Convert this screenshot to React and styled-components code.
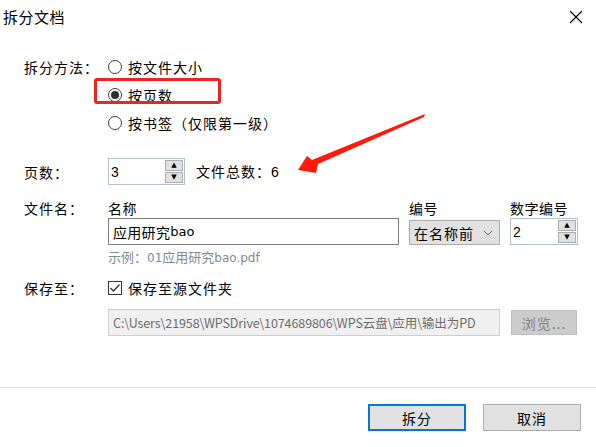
import React from "react";
import styled, { createGlobalStyle } from "styled-components";

const GlobalStyle = createGlobalStyle`
  html, body {
    margin: 0;
    padding: 0;
    background: #ffffff;
  }
  body {
    font-family: "Noto Sans CJK SC", "Microsoft YaHei", sans-serif;
    font-size: 14px;
    color: #000;
  }
`;

function App() {
  return (
    <>
      <GlobalStyle />
      <Dialog>
        <TitleBar>
          <Title>拆分文档</Title>
          <CloseButton>
            <svg width="14" height="14" viewBox="0 0 14 14">
              <path d="M1 1 L13 13 M13 1 L1 13" stroke="#000" strokeWidth="1.1" />
            </svg>
          </CloseButton>
        </TitleBar>

        <Body>
          <Row>
            <Label>拆分方法：</Label>
            <Options>
              <Option>
                <Radio />
                按文件大小
              </Option>
              <Option>
                <Radio checked />
                按页数
              </Option>
              <Option>
                <Radio />
                按书签（仅限第一级）
              </Option>
            </Options>
          </Row>

          <PagesRow>
            <Label>页数：</Label>
            <Spinner width={77}>
              <SpinValue>3</SpinValue>
              <SpinButtons>
                <SpinButton>▲</SpinButton>
                <SpinButton>▼</SpinButton>
              </SpinButtons>
            </Spinner>
            <Total>
              文件总数：<Num>6</Num>
            </Total>
          </PagesRow>

          <NameRow>
            <Label>文件名：</Label>
            <Field>
              <SubLabel>名称</SubLabel>
              <TextInput>
                应用研究<Latin>bao</Latin>
              </TextInput>
              <Hint>
                示例：<Latin>01</Latin>应用研究<Latin>bao.pdf</Latin>
              </Hint>
            </Field>
            <Column>
              <SubLabel>编号</SubLabel>
              <Select>
                在名称前
                <svg width="10" height="6" viewBox="0 0 10 6">
                  <path d="M1 1 L5 5 L9 1" fill="none" stroke="#666" strokeWidth="1" />
                </svg>
              </Select>
            </Column>
            <Column>
              <SubLabel>数字编号</SubLabel>
              <Spinner width={68}>
                <SpinValue>2</SpinValue>
                <SpinButtons>
                  <SpinButton>▲</SpinButton>
                  <SpinButton>▼</SpinButton>
                </SpinButtons>
              </Spinner>
            </Column>
          </NameRow>

          <SaveRow>
            <Label>保存至：</Label>
            <Field>
              <Option>
                <Checkbox>
                  <svg width="12" height="10" viewBox="0 0 12 10">
                    <path d="M1.5 5 L4.5 8 L10.5 1.5" fill="none" stroke="#333" strokeWidth="1.3" />
                  </svg>
                </Checkbox>
                保存至源文件夹
              </Option>
              <PathRow>
                <PathInput>
                  <PathText>C:\Users\21958\WPSDrive\1074689806\WPS云盘\应用\输出为PD</PathText>
                </PathInput>
                <BrowseButton>浏览...</BrowseButton>
              </PathRow>
            </Field>
          </SaveRow>
        </Body>

        <Footer>
          <Button primary>拆分</Button>
          <Button>取消</Button>
        </Footer>

        <Highlight />
        <Arrow width="140" height="70" viewBox="290 110 140 70">
          <polygon
            points="425,114 424,117 318,164 316,173 298,170 307,156 312,160"
            fill="#ff1a0a"
          />
        </Arrow>
      </Dialog>
    </>
  );
}

const Dialog = styled.div`
  position: relative;
  width: 596px;
  height: 447px;
  background: #fff;
  display: flex;
  flex-direction: column;
  overflow: hidden;
`;

const TitleBar = styled.div`
  height: 35px;
  display: flex;
  align-items: center;
  justify-content: space-between;
  padding: 0 13px 0 3px;
`;

const Title = styled.div`
  font-size: 15px;
  letter-spacing: 0.5px;
  line-height: 20px;
  margin-top: -2px;
`;

const CloseButton = styled.div`
  width: 14px;
  height: 14px;
  display: flex;
  margin-top: -2px;
`;

const Body = styled.div`
  flex: 1;
  padding: 22px 0 0 24px;
  display: flex;
  flex-direction: column;
`;

const Row = styled.div`
  display: flex;
  align-items: flex-start;
`;

const Label = styled.div`
  width: 84px;
  flex-shrink: 0;
  line-height: 20px;
  letter-spacing: 1px;
`;

const Options = styled.div`
  display: flex;
  flex-direction: column;
  gap: 8px;
`;

const Option = styled.div`
  display: flex;
  align-items: center;
  gap: 6px;
  height: 20px;
  line-height: 20px;
  letter-spacing: 1px;
`;

const Radio = styled.span`
  width: 14px;
  height: 14px;
  box-sizing: border-box;
  border-radius: 50%;
  border: 1px solid #3a3f45;
  background: #fff;
  position: relative;
  flex-shrink: 0;

  &::after {
    content: "";
    display: ${(p) => (p.checked ? "block" : "none")};
    position: absolute;
    left: 2px;
    top: 2px;
    width: 8px;
    height: 8px;
    border-radius: 50%;
    background: #2b2f33;
  }
`;

const PagesRow = styled.div`
  display: flex;
  align-items: center;
  margin-top: 25px;
`;

const Spinner = styled.div`
  width: ${(p) => p.width}px;
  height: 27px;
  box-sizing: border-box;
  border: 1px solid #b4c0c8;
  display: flex;
  align-items: center;
  justify-content: space-between;
  padding: 0 1px 0 2px;
`;

const SpinValue = styled.span`
  font-family: "Liberation Sans", Arial, sans-serif;
  font-size: 14px;
  color: #000;
`;

const SpinButtons = styled.div`
  display: flex;
  flex-direction: column;
  gap: 1px;
`;

const SpinButton = styled.div`
  width: 18px;
  height: 11px;
  box-sizing: border-box;
  border: 1px solid #adadad;
  background: #e1e1e1;
  font-size: 7px;
  line-height: 9px;
  text-align: center;
  color: #000;
  font-family: "DejaVu Sans", sans-serif;
`;

const Total = styled.div`
  margin-left: 11px;
  letter-spacing: 1px;
  line-height: 20px;
`;

const Num = styled.span`
  font-family: "Liberation Sans", Arial, sans-serif;
  font-weight: normal;
  font-size: 14px;
`;

const NameRow = styled.div`
  display: flex;
  align-items: flex-start;
  margin-top: 13px;
`;

const Field = styled.div`
  display: flex;
  flex-direction: column;
`;

const Column = styled.div`
  display: flex;
  flex-direction: column;
  margin-left: 10px;
`;

const SubLabel = styled.div`
  line-height: 20px;
  height: 20px;
  letter-spacing: 0.5px;
`;

const TextInput = styled.div`
  width: 291px;
  height: 27px;
  box-sizing: border-box;
  border: 1px solid #7a7a7a;
  padding: 0 4px;
  display: flex;
  align-items: center;
  line-height: 20px;
  letter-spacing: 0.3px;
`;

const Latin = styled.span`
  font-family: "DejaVu Sans", "Liberation Sans", sans-serif;
  font-size: 13px;
  letter-spacing: 0;
`;

const Hint = styled.div`
  color: #7f8a94;
  line-height: 20px;
  margin-top: 2px;
  font-size: 13px;

  & ${Latin} {
    font-size: 12px;
  }
`;

const Select = styled.div`
  width: 91px;
  height: 25px;
  margin-top: 2px;
  box-sizing: border-box;
  border: 1px solid #adadad;
  background: #e1e1e1;
  display: flex;
  align-items: center;
  justify-content: space-between;
  padding: 0 6px 0 4px;
  letter-spacing: 1px;
`;

const SaveRow = styled.div`
  display: flex;
  align-items: flex-start;
  margin-top: 10px;
`;

const Checkbox = styled.span`
  width: 14px;
  height: 14px;
  box-sizing: border-box;
  border: 1px solid #333;
  display: flex;
  align-items: center;
  justify-content: center;
  flex-shrink: 0;
`;

const PathRow = styled.div`
  display: flex;
  align-items: center;
  gap: 11px;
  margin-top: 11px;
`;

const PathInput = styled.div`
  width: 392px;
  height: 27px;
  box-sizing: border-box;
  border: 1px solid #cdcdcd;
  background: #f0f0f0;
  padding: 0 4px;
  display: flex;
  align-items: center;
  overflow: hidden;
`;

const PathText = styled.span`
  color: #6d6d6d;
  font-size: 12.5px;
  white-space: nowrap;
  letter-spacing: -0.1px;
`;

const BrowseButton = styled.div`
  width: 66px;
  height: 25px;
  box-sizing: border-box;
  border: 1px solid #bfbfbf;
  background: #cccccc;
  color: #838383;
  display: flex;
  align-items: center;
  justify-content: center;
  letter-spacing: 1px;
`;

const Footer = styled.div`
  height: 60px;
  border-top: 1px solid #d8dde2;
  display: flex;
  justify-content: flex-end;
  gap: 17px;
  padding: 16px 15px 0 0;
  box-sizing: border-box;
`;

const Button = styled.div`
  width: 98px;
  height: 27px;
  box-sizing: border-box;
  border: ${(p) => (p.primary ? "2px solid #0078d7" : "1px solid #adadad")};
  background: #e1e1e1;
  display: flex;
  align-items: center;
  justify-content: center;
  letter-spacing: 1px;
`;

const Highlight = styled.div`
  position: absolute;
  left: 94px;
  top: 78px;
  width: 127px;
  height: 26px;
  box-sizing: border-box;
  border: 3px solid #f52020;
  border-radius: 3px;
  pointer-events: none;
`;

const Arrow = styled.svg`
  position: absolute;
  left: 290px;
  top: 110px;
  pointer-events: none;
`;

export default App;
